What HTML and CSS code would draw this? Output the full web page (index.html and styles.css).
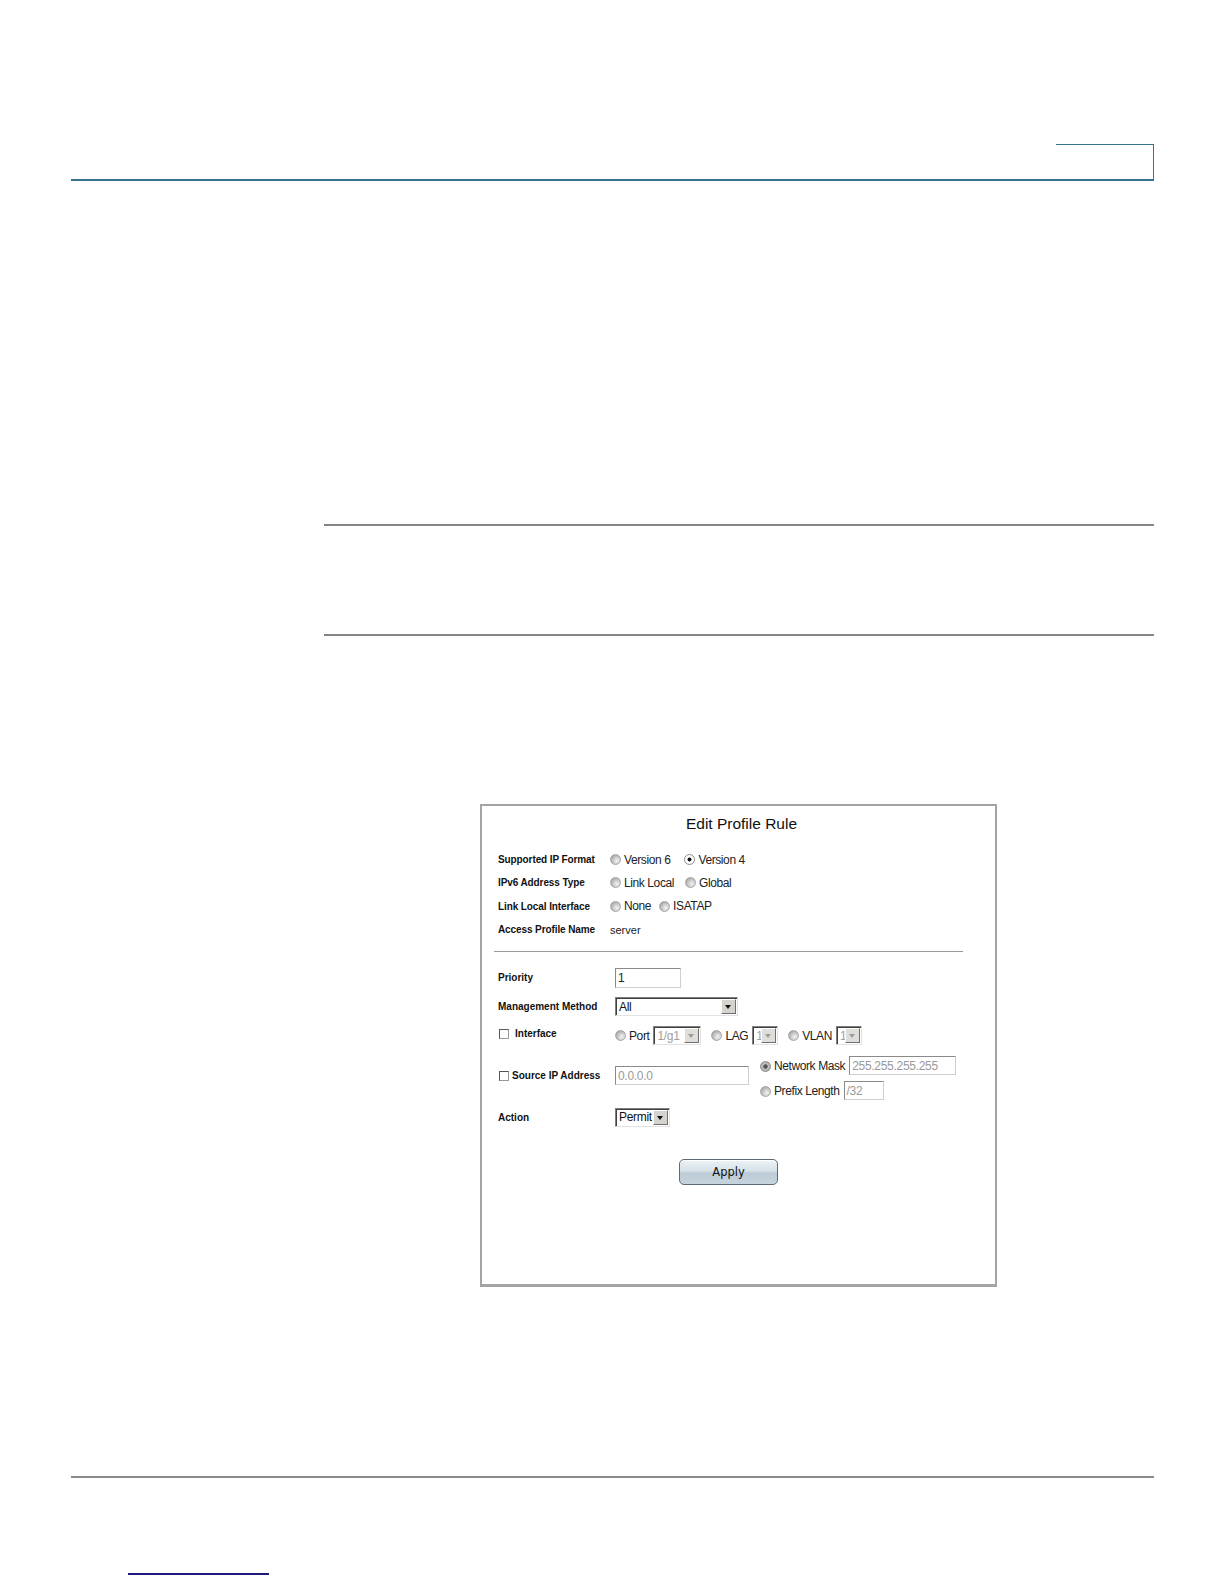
FILE: index.html
```html
<!DOCTYPE html>
<html lang="en">
<head>
<meta charset="utf-8">
<title>Edit Profile Rule</title>
<link rel="stylesheet" href="styles.css">
</head>
<body>
<div class="page">
  <header class="header"><div class="tab"></div></header>
  <div class="rule rule-top"></div>
  <div class="rule rule-bottom"></div>

  <div class="frame">
    <h1 class="title">Edit Profile Rule</h1>

    <div class="info">
      <div class="row">
        <span class="lbl">Supported IP Format</span>
        <span class="vals">
          <span class="opt wide"><span class="radio"></span>Version 6</span>
          <span class="opt"><span class="radio checked"></span>Version 4</span>
        </span>
      </div>
      <div class="row">
        <span class="lbl">IPv6 Address Type</span>
        <span class="vals">
          <span class="opt mid"><span class="radio"></span>Link Local</span>
          <span class="opt"><span class="radio"></span>Global</span>
        </span>
      </div>
      <div class="row">
        <span class="lbl">Link Local Interface</span>
        <span class="vals">
          <span class="opt"><span class="radio"></span>None</span>
          <span class="opt"><span class="radio"></span>ISATAP</span>
        </span>
      </div>
      <div class="row">
        <span class="lbl">Access Profile Name</span>
        <span class="vals"><span class="plain">server</span></span>
      </div>
    </div>

    <hr class="sep">

    <div class="form">
      <div class="frow">
        <span class="flbl">Priority</span>
        <span class="input priority">1</span>
      </div>
      <div class="frow">
        <span class="flbl">Management Method</span>
        <span class="select mgmt"><span class="sel-text">All</span><span class="arrow"></span></span>
      </div>
      <div class="frow iface">
        <span class="flbl"><span class="check"></span>Interface</span>
        <span class="ctrls">
          <span class="radio"></span><span class="ctext">Port</span>
          <span class="select disabled port"><span class="sel-text">1/g1</span><span class="arrow"></span></span>
          <span class="radio gap"></span><span class="ctext">LAG</span>
          <span class="select disabled small"><span class="sel-text">1</span><span class="arrow"></span></span>
          <span class="radio gap"></span><span class="ctext">VLAN</span>
          <span class="select disabled small"><span class="sel-text">1</span><span class="arrow"></span></span>
        </span>
      </div>
      <div class="frow source">
        <span class="flbl"><span class="check"></span><span class="src-lbl">Source IP Address</span></span>
        <span class="input disabled-text srcip">0.0.0.0</span>
        <span class="mask-block">
          <span class="mask-line"><span class="radio checked dim"></span><span class="ctext">Network Mask</span><span class="input disabled-text netmask">255.255.255.255</span></span>
          <span class="mask-line"><span class="radio"></span><span class="ctext">Prefix Length</span><span class="input disabled-text prefix">/32</span></span>
        </span>
      </div>
      <div class="frow action">
        <span class="flbl">Action</span>
        <span class="select permit"><span class="sel-text">Permit</span><span class="arrow"></span></span>
      </div>
    </div>

    <div class="actions"><button class="apply" type="button">Apply</button></div>
  </div>

  <div class="footer-line"></div>
  <div class="footer-link"></div>
</div>
</body>
</html>
```

FILE: styles.css
```css
html, body {
  margin: 0;
  padding: 0;
  background: #ffffff;
}

.page {
  width: 1224px;
  height: 1584px;
  overflow: hidden;
  font-family: "Liberation Sans", Arial, sans-serif;
  color: #111;
}

/* ---------- page chrome ---------- */
.header {
  margin: 144px 0 0 71px;
  width: 1083px;
  display: flex;
  justify-content: flex-end;
  border-bottom: 2px solid #36718d;
}

.tab {
  width: 97px;
  height: 34px;
  border-top: 1px solid #36718d;
  border-right: 1px solid #36718d;
}

.rule {
  margin-left: 324px;
  width: 830px;
  height: 0;
  border-top: 2px solid #858585;
}

.rule-top { margin-top: 343px; }
.rule-bottom { margin-top: 108px; }

.footer-line {
  margin: 189px 0 0 71px;
  width: 1083px;
  border-top: 2px solid #8a8a8a;
}

.footer-link {
  margin: 95px 0 0 128px;
  width: 141px;
  border-top: 2px solid #1b1b7c;
}

/* ---------- screenshot frame ---------- */
.frame {
  box-sizing: border-box;
  margin: 168px 0 0 480px;
  width: 517px;
  height: 483px;
  border: 2px solid #a4a4a4;
  border-bottom-width: 3px;
  background: #fff;
}

.title {
  margin: 0;
  padding: 8px 0 0 6px;
  font-size: 15.5px;
  font-weight: normal;
  line-height: 20px;
  text-align: center;
  color: #111;
}

.info {
  margin-top: 14px;
  padding-left: 16px;
}

.row {
  display: flex;
  align-items: center;
  height: 23.3px;
}

.lbl {
  width: 112px;
  font-size: 10px;
  font-weight: bold;
  letter-spacing: -0.1px;
  color: #111;
  white-space: nowrap;
}

.vals {
  display: flex;
  align-items: center;
  font-size: 12px;
  letter-spacing: -0.4px;
  color: #222;
}

.opt {
  display: inline-flex;
  align-items: center;
  margin-right: 8px;
}

.opt.wide { margin-right: 14px; }
.opt.mid { margin-right: 11px; }

.plain {
  font-size: 11px;
  letter-spacing: 0;
}

/* radio buttons */
.radio {
  display: inline-block;
  box-sizing: border-box;
  width: 11px;
  height: 11px;
  margin-right: 3px;
  border-radius: 50%;
  border: 1px solid #a8a8a8;
  background: radial-gradient(circle at 65% 65%, #f4f4f4 0, #c9c9c9 45%, #8e8e8e 100%);
  flex: none;
}

.radio.checked {
  background: radial-gradient(circle, #111 0, #111 1.7px, #fff 2.3px, #fff 100%);
  border-color: #8c8c8c;
}

.radio.checked.dim {
  background: radial-gradient(circle, #555 0, #555 1.9px, #c4c4c4 2.5px, #999 100%);
}

.radio.gap { margin-left: 10px; }

/* separator */
.sep {
  margin: 10px 32px 0 12px;
  height: 0;
  border: 0;
  border-top: 1px solid #9a9a9a;
}

/* ---------- form ---------- */
.form {
  margin-top: 11px;
  padding-left: 16px;
}

.frow {
  display: flex;
  align-items: center;
  height: 29px;
}

.flbl {
  display: inline-flex;
  align-items: center;
  width: 117px;
  flex: none;
  font-size: 10px;
  font-weight: bold;
  color: #111;
  white-space: nowrap;
}

.check {
  display: inline-block;
  box-sizing: border-box;
  width: 10px;
  height: 10px;
  margin: 0 6px 0 1px;
  border: 1px solid #555;
  border-right-color: #999;
  border-bottom-color: #999;
  background: #fff;
}

.src-lbl { margin-left: -3px; }

.input {
  box-sizing: border-box;
  display: inline-flex;
  align-items: center;
  height: 19px;
  padding-left: 2px;
  border: 1px solid #8a8a8a;
  border-right-color: #cfcfcf;
  border-bottom-color: #cfcfcf;
  font-size: 12px;
  letter-spacing: -0.3px;
  color: #222;
  background: #fff;
  flex: none;
}

.input.priority {
  width: 66px;
  height: 20px;
}

.disabled-text { color: #9a9a9a; }

.select {
  box-sizing: border-box;
  display: inline-flex;
  align-items: stretch;
  height: 19px;
  border: 1px solid #7f7f7f;
  border-right-color: #e2e2e2;
  border-bottom-color: #e2e2e2;
  box-shadow: inset 1px 1px 0 #404040;
  background: #fff;
  flex: none;
}

.sel-text {
  flex: 1;
  display: flex;
  align-items: center;
  padding-left: 3px;
  font-size: 12px;
  letter-spacing: -0.3px;
  color: #111;
  overflow: hidden;
  white-space: nowrap;
}

.arrow {
  position: relative;
  box-sizing: border-box;
  width: 15px;
  margin: 1px 1px 1px 0;
  background: #d6d3ce;
  border: 1px solid #fff;
  border-right-color: #6f6f6f;
  border-bottom-color: #6f6f6f;
}

.arrow::after {
  content: "";
  position: absolute;
  left: 3px;
  top: 5px;
  border-left: 3.5px solid transparent;
  border-right: 3.5px solid transparent;
  border-top: 4px solid #111;
}

.select.mgmt { width: 123px; }
.select.permit { width: 55px; }

.select.disabled .sel-text { color: #a0a0a0; }
.select.disabled .arrow { background: #e1ded9; }
.select.disabled .arrow::after { border-top-color: #9d9d9d; }
.select.port { width: 48px; }
.select.small { width: 26px; }

.frow.iface {
  height: 25px;
  margin-bottom: 4px;
}

.ctrls {
  display: flex;
  align-items: center;
  margin-top: 4px;
}

.ctext {
  margin-right: 4px;
  font-size: 12px;
  letter-spacing: -0.4px;
  color: #222;
  white-space: nowrap;
}

.frow.source {
  margin-top: 6px;
  height: 47px;
}

.input.srcip {
  width: 134px;
}

.mask-block {
  display: flex;
  flex-direction: column;
  gap: 6px;
  margin: 5px 0 0 11px;
}

.mask-line {
  display: flex;
  align-items: center;
}

.mask-line .radio { margin-top: 2px; }

.input.netmask { width: 107px; }
.input.prefix { width: 40px; }

.frow.action {
  margin-top: 5px;
  height: 26px;
}

/* ---------- apply button ---------- */
.actions {
  margin-top: 29px;
  padding-left: 197px;
}

.apply {
  box-sizing: border-box;
  width: 99px;
  height: 26px;
  padding: 0;
  border: 1px solid #5b6b78;
  border-radius: 5px;
  background: linear-gradient(to bottom, #eef3f6 0%, #d6e1e8 45%, #bccbd6 55%, #c6d4dd 100%);
  box-shadow: inset 0 1px 0 #ffffff;
  font-family: "DejaVu Sans", Verdana, sans-serif;
  font-size: 11.5px;
  color: #111;
}
```
